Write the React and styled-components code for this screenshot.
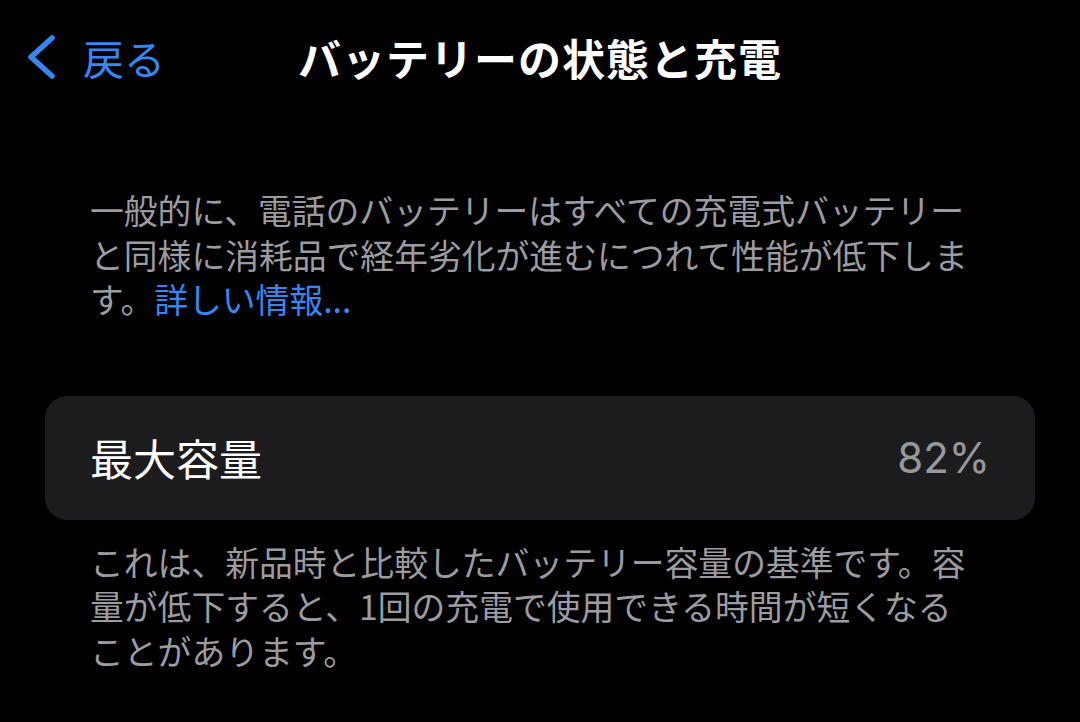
import React from "react";
import styled, { createGlobalStyle } from "styled-components";

const Global = createGlobalStyle`
  html, body { margin: 0; padding: 0; background: #000; }
  body { font-family: "Noto Sans CJK JP", "Noto Sans", sans-serif; -webkit-font-smoothing: antialiased; }
`;

const Page = styled.div`
  width: 1080px;
  height: 722px;
  background: #000;
  overflow: hidden;
  display: flex;
  flex-direction: column;
`;

const Header = styled.header`
  height: 120px;
  box-sizing: border-box;
  padding-bottom: 6px;
  display: grid;
  grid-template-columns: 1fr auto 1fr;
  align-items: center;
`;

const Back = styled.div`
  display: flex;
  align-items: center;
  gap: 27px;
  padding-left: 26px;
  color: #3488f4;
  font-size: 41px;
  line-height: 1;
`;

const Title = styled.h1`
  margin: 0;
  color: #fff;
  font-size: 43px;
  font-weight: 700;
  letter-spacing: 1px;
  line-height: 1;
`;

const Note = styled.p`
  margin: 0;
  padding: 0 90px;
  color: #9b9ba1;
  font-size: 33.8px;
  line-height: 44.5px;
  white-space: nowrap;
  margin-top: ${(p) => p.$top}px;
`;

const Link = styled.span`
  color: #3488f4;
`;

const Card = styled.div`
  margin: 74px 45px 0;
  height: 124px;
  border-radius: 22px;
  background: #1c1c1e;
  display: flex;
  align-items: center;
  justify-content: space-between;
  padding: 0 45px;
  box-sizing: border-box;
`;

const Label = styled.span`
  color: #fff;
  font-size: 43px;
  line-height: 1;
`;

const Value = styled.span`
  color: #98989e;
  font-family: "Inter", "Noto Sans", sans-serif;
  font-size: 42px;
  line-height: 1;
`;

export default function App() {
  return (
    <Page>
      <Global />
      <Header>
        <Back>
          <svg width="30" height="46" viewBox="0 0 30 46">
            <path d="M26 4 L5 23 L26 42" fill="none" stroke="#3488f4" strokeWidth="5.5" strokeLinecap="round" strokeLinejoin="round" />
          </svg>
          <span>戻る</span>
        </Back>
        <Title>バッテリーの状態と充電</Title>
        <div />
      </Header>
      <Note $top={68}>
        一般的に、電話のバッテリーはすべての充電式バッテリー<br />
        と同様に消耗品で経年劣化が進むにつれて性能が低下しま<br />
        す。<Link>詳しい情報...</Link>
      </Note>
      <Card>
        <Label>最大容量</Label>
        <Value>82%</Value>
      </Card>
      <Note $top={20}>
        これは、新品時と比較したバッテリー容量の基準です。容<br />
        量が低下すると、1回の充電で使用できる時間が短くなる<br />
        ことがあります。
      </Note>
    </Page>
  );
}
